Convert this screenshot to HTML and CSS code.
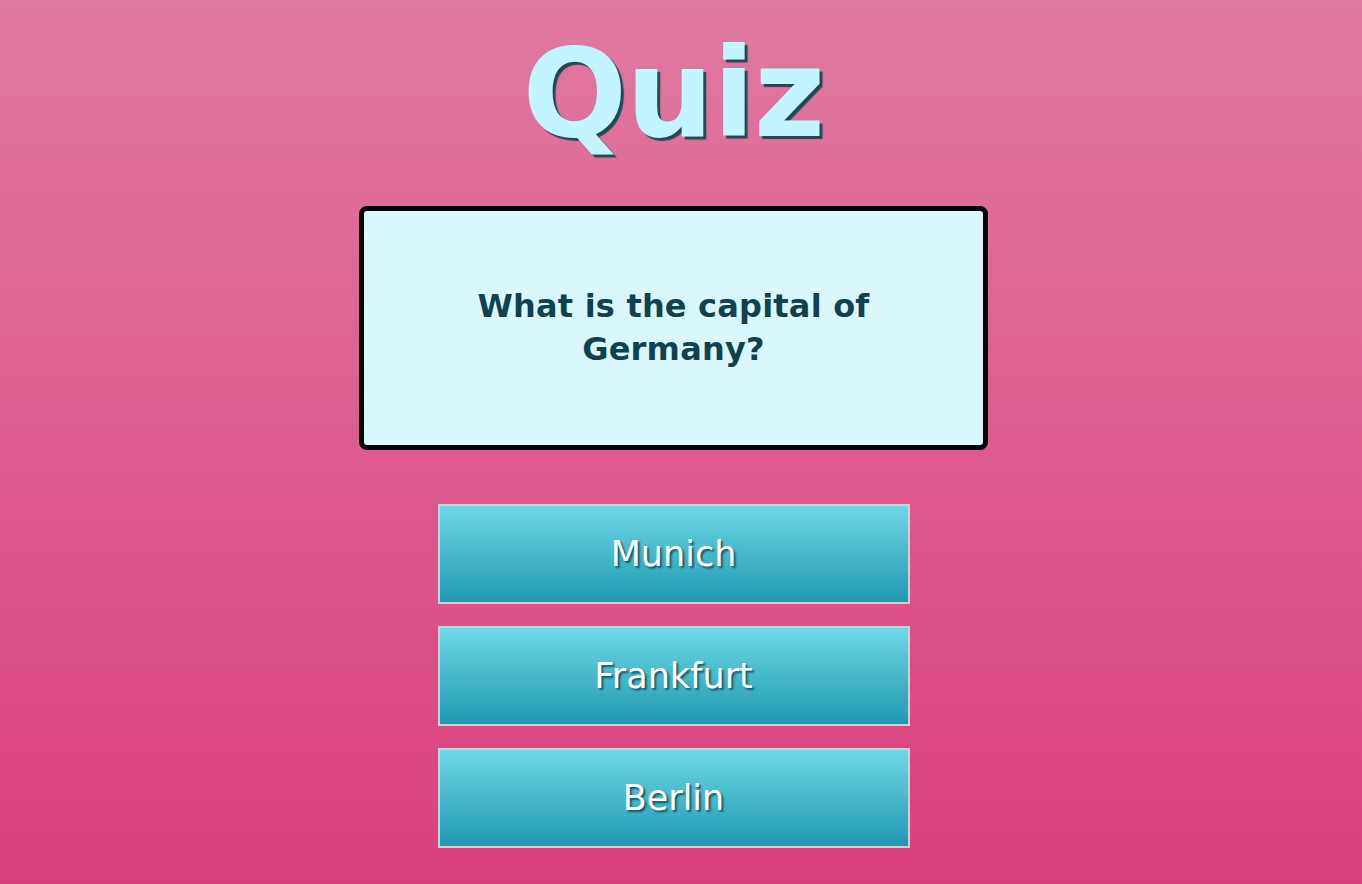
FILE: index.html
```html
<!DOCTYPE html>
<html lang="en">
<head>
<meta charset="utf-8">
<title>Quiz</title>
<link rel="stylesheet" href="styles.css">
</head>
<body>
<main class="page">
  <h1 class="title">Quiz</h1>
  <section class="question-box">
    <p class="question">What is the capital of<br>Germany?</p>
  </section>
  <div class="answers">
    <button class="answer">Munich</button>
    <button class="answer">Frankfurt</button>
    <button class="answer">Berlin</button>
  </div>
</main>
</body>
</html>
```
FILE: styles.css
```css
html, body {
  margin: 0;
  padding: 0;
  height: 100%;
}
body {
  background: linear-gradient(to bottom, #e07aa1 0%, #da3f7d 100%);
  font-family: "DejaVu Sans", Verdana, sans-serif;
  min-height: 884px;
}
.page {
  display: flex;
  flex-direction: column;
  align-items: center;
  padding-right: 15px;
}
.title {
  margin: 20px 0 0 0;
  font-size: 123px;
  line-height: 148px;
  font-weight: bold;
  color: #c2f5fd;
  text-shadow: 3px 3px 1px #1d4b55;
  letter-spacing: -1px;
}
.question-box {
  margin-top: 38px;
  box-sizing: border-box;
  width: 629px;
  height: 244px;
  border: 5px solid #000;
  border-radius: 8px;
  background: #d8f8fc;
  display: flex;
  align-items: center;
  justify-content: center;
}
.question {
  margin: 0;
  text-align: center;
  font-size: 32px;
  line-height: 43px;
  font-weight: bold;
  color: #0f4250;
  letter-spacing: 0.2px;
}
.answers {
  margin-top: 54px;
  display: flex;
  flex-direction: column;
  gap: 22px;
}
.answer {
  box-sizing: border-box;
  width: 472px;
  height: 100px;
  border: 2px solid #c9d1d3;
  background: linear-gradient(to bottom, #6fd7e7 0%, #1f99b0 100%);
  color: #fff;
  font-family: "DejaVu Sans", Verdana, sans-serif;
  font-size: 35px;
  text-shadow: 2px 2px 2px #1a5664;
  padding: 0;
  cursor: pointer;
}
```
